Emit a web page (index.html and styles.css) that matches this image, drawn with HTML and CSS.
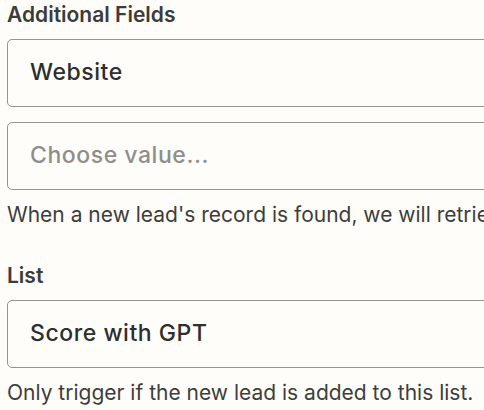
FILE: index.html
```html
<!DOCTYPE html>
<html>
<head>
<meta charset="utf-8">
<link rel="stylesheet" href="styles.css">
</head>
<body>
<div class="form">
  <div class="field">
    <div class="label">Additional Fields</div>
    <div class="inputs">
      <div class="box"><span class="value">Website</span></div>
      <div class="box"><span class="placeholder">Choose value...</span></div>
    </div>
    <div class="help">When a new lead's record is found, we will retrieve the values of these additional fields.</div>
  </div>
  <div class="field">
    <div class="label">List</div>
    <div class="inputs">
      <div class="box"><span class="value">Score with GPT</span></div>
    </div>
    <div class="help">Only trigger if the new lead is added to this list.</div>
  </div>
</div>
</body>
</html>
```
FILE: styles.css
```css
html, body {
  margin: 0;
  padding: 0;
  background: #fffdf9;
  overflow: hidden;
}
body {
  font-family: Inter, "Noto Sans", sans-serif;
  color: #2d2e2e;
  width: 484px;
  height: 410px;
}
.form {
  display: flex;
  flex-direction: column;
  gap: 33px;
  padding-left: 7px;
}
.field {
  display: flex;
  flex-direction: column;
}
.label {
  font-size: 21px;
  font-weight: 600;
  line-height: 28px;
  padding-top: 1px;
  margin-bottom: 10px;
  color: #3b3b3a;
}
.inputs {
  display: flex;
  flex-direction: column;
  gap: 15px;
}
.box {
  width: 640px;
  height: 68px;
  box-sizing: border-box;
  border: 1px solid #959492;
  border-radius: 5px;
  display: flex;
  align-items: center;
  padding-left: 22px;
  padding-bottom: 2px;
  font-size: 23px;
  font-weight: 500;
  letter-spacing: 0.55px;
}
.value {
  color: #2d2e2e;
}
.placeholder {
  color: #8f8e8c;
}
.help {
  margin-top: 12px;
  font-size: 21px;
  line-height: 26px;
  color: #3d3d3c;
  white-space: nowrap;
  overflow: hidden;
}
```
